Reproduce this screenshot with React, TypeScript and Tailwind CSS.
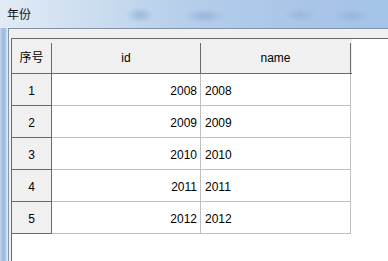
const rows = [
  { no: 1, id: 2008, name: "2008" },
  { no: 2, id: 2009, name: "2009" },
  { no: 3, id: 2010, name: "2010" },
  { no: 4, id: 2011, name: "2011" },
  { no: 5, id: 2012, name: "2012" },
];

export default function App() {
  return (
    <div className="flex h-[261px] w-[388px] flex-col overflow-hidden bg-white font-['Liberation_Sans','Noto_Sans_CJK_SC',sans-serif] text-[12px] text-black">
      {/* Aero title bar */}
      <div className="flex h-[28px] shrink-0 items-center bg-[radial-gradient(ellipse_14px_8px_at_140px_15px,#9ab8dc,transparent),radial-gradient(ellipse_20px_7px_at_205px_16px,#96b5da,transparent),radial-gradient(ellipse_16px_7px_at_300px_15px,#9ab8dc,transparent),radial-gradient(ellipse_18px_7px_at_352px_16px,#98b6db,transparent),linear-gradient(90deg,#e2ebf5_0%,#cadcef_25%,#b4cdea_50%,#a8c5e8_80%,#a4c3e8_100%)] pl-[7px]">
        <span className="pt-[1px] text-[12px] leading-none text-[#111]">年份</span>
      </div>

      <div className="flex min-h-0 flex-1">
        {/* window frame */}
        <div className="w-[8px] shrink-0 bg-[linear-gradient(90deg,#c7d9ee_0%,#a3c0e2_25%,#9dbce0_60%,#c9dbef_85%,#eef4fa_100%)]" />

        <div className="flex min-w-0 flex-1 flex-col border-l border-t border-[#8593a6] bg-[#f0f0f0] pl-[2px] pt-[9px]">
          {/* table view */}
          <div className="flex-1 border-l border-t border-[#6a6a6a] bg-white">
            {/* header row */}
            <div className="flex h-[35px] w-[340px] border-b border-[#6a6a6a] bg-[#f0f0f0] pt-[4px]">
              <div className="flex w-[40px] items-center justify-center border-r border-[#6a6a6a]">
                序号
              </div>
              <div className="flex w-[149px] items-center justify-center border-r border-[#6a6a6a]">
                id
              </div>
              <div className="flex w-[150px] items-center justify-center border-r border-[#6a6a6a]">
                name
              </div>
            </div>

            {rows.map((row) => (
              <div key={row.no} className="flex h-[32px] w-[340px]">
                <div className="flex w-[40px] items-center justify-center border-b border-r border-[#6a6a6a] bg-[#f0f0f0] pt-[3px]">
                  {row.no}
                </div>
                <div className="flex w-[149px] items-center justify-end border-b border-r border-[#c0c0c0] pr-[3px] pt-[3px]">
                  {row.id}
                </div>
                <div className="flex w-[150px] items-center border-b border-r border-[#c0c0c0] pl-[4px] pt-[3px]">
                  {row.name}
                </div>
              </div>
            ))}
          </div>
        </div>
      </div>
    </div>
  );
}
